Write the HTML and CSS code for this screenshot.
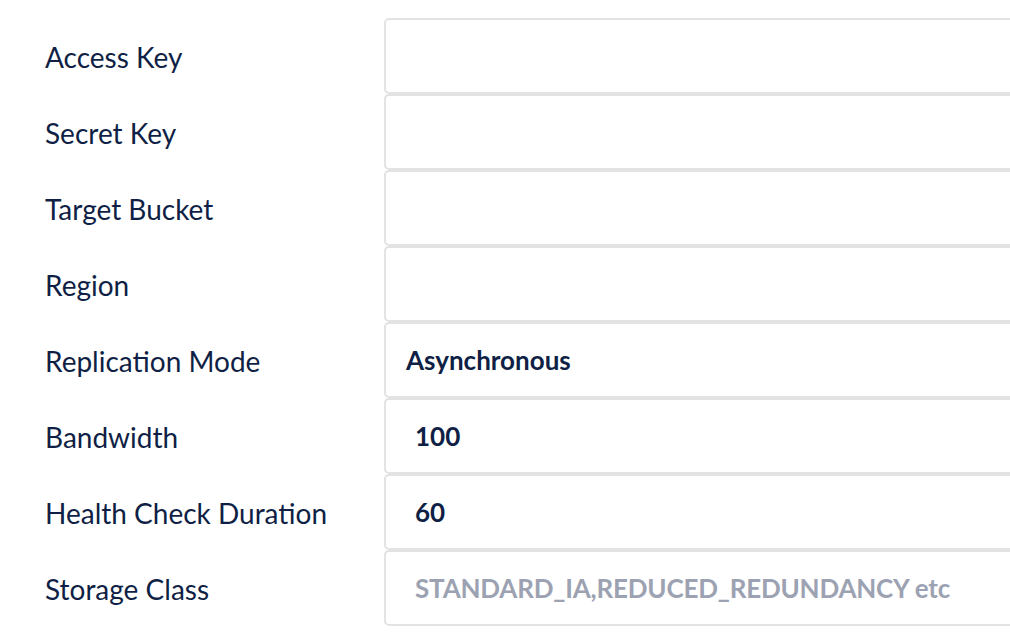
FILE: index.html
```html
<!DOCTYPE html>
<html lang="en">
<head>
<meta charset="utf-8">
<title>Replication</title>
<link rel="stylesheet" href="styles.css">
</head>
<body>
<form class="form">
  <div class="row"><label class="label">Access Key</label><div class="field"><input class="input" type="text"></div></div>
  <div class="row"><label class="label">Secret Key</label><div class="field"><input class="input" type="text"></div></div>
  <div class="row"><label class="label">Target Bucket</label><div class="field"><input class="input" type="text"></div></div>
  <div class="row"><label class="label">Region</label><div class="field"><input class="input" type="text"></div></div>
  <div class="row"><label class="label">Replication Mode</label><div class="field"><div class="select">Asynchronous</div></div></div>
  <div class="row"><label class="label">Bandwidth</label><div class="field"><input class="input" type="text" value="100"></div></div>
  <div class="row"><label class="label">Health Check Duration</label><div class="field"><input class="input" type="text" value="60"></div></div>
  <div class="row"><label class="label">Storage Class</label><div class="field"><input class="input" type="text" placeholder="STANDARD_IA,REDUCED_REDUNDANCY etc"></div></div>
</form>
</body>
</html>
```

FILE: styles.css
```css
html, body {
  margin: 0;
  padding: 0;
  background: #ffffff;
  overflow: hidden;
}
body {
  font-family: Lato, "Open Sans", sans-serif;
  width: 1010px;
  height: 636px;
}
.form {
  box-sizing: border-box;
  width: 1010px;
  overflow: hidden;
  display: flex;
  flex-direction: column;
  padding: 18px 0 0 45px;
}
.row {
  display: grid;
  grid-template-columns: 339px 720px;
  height: 76px;
  align-items: center;
}
.label {
  font-size: 28px;
  color: #0f1f45;
  font-weight: 400;
  line-height: 1;
  padding-top: 1px;
}
.field {
  height: 76px;
}
.input, .select {
  box-sizing: border-box;
  width: 100%;
  height: 76px;
  border: 2px solid #e3e3e3;
  border-radius: 5px;
  background: #fff;
  font-family: Lato, "Open Sans", sans-serif;
  font-weight: 700;
  font-size: 26px;
  color: #0f1f45;
  outline: none;
  margin: 0;
}
.input {
  padding: 0 29px;
}
.input::placeholder {
  color: #9ca2b2;
  opacity: 1;
  letter-spacing: -0.2px;
}
.select {
  display: flex;
  align-items: center;
  padding: 0 20px;
}
```
